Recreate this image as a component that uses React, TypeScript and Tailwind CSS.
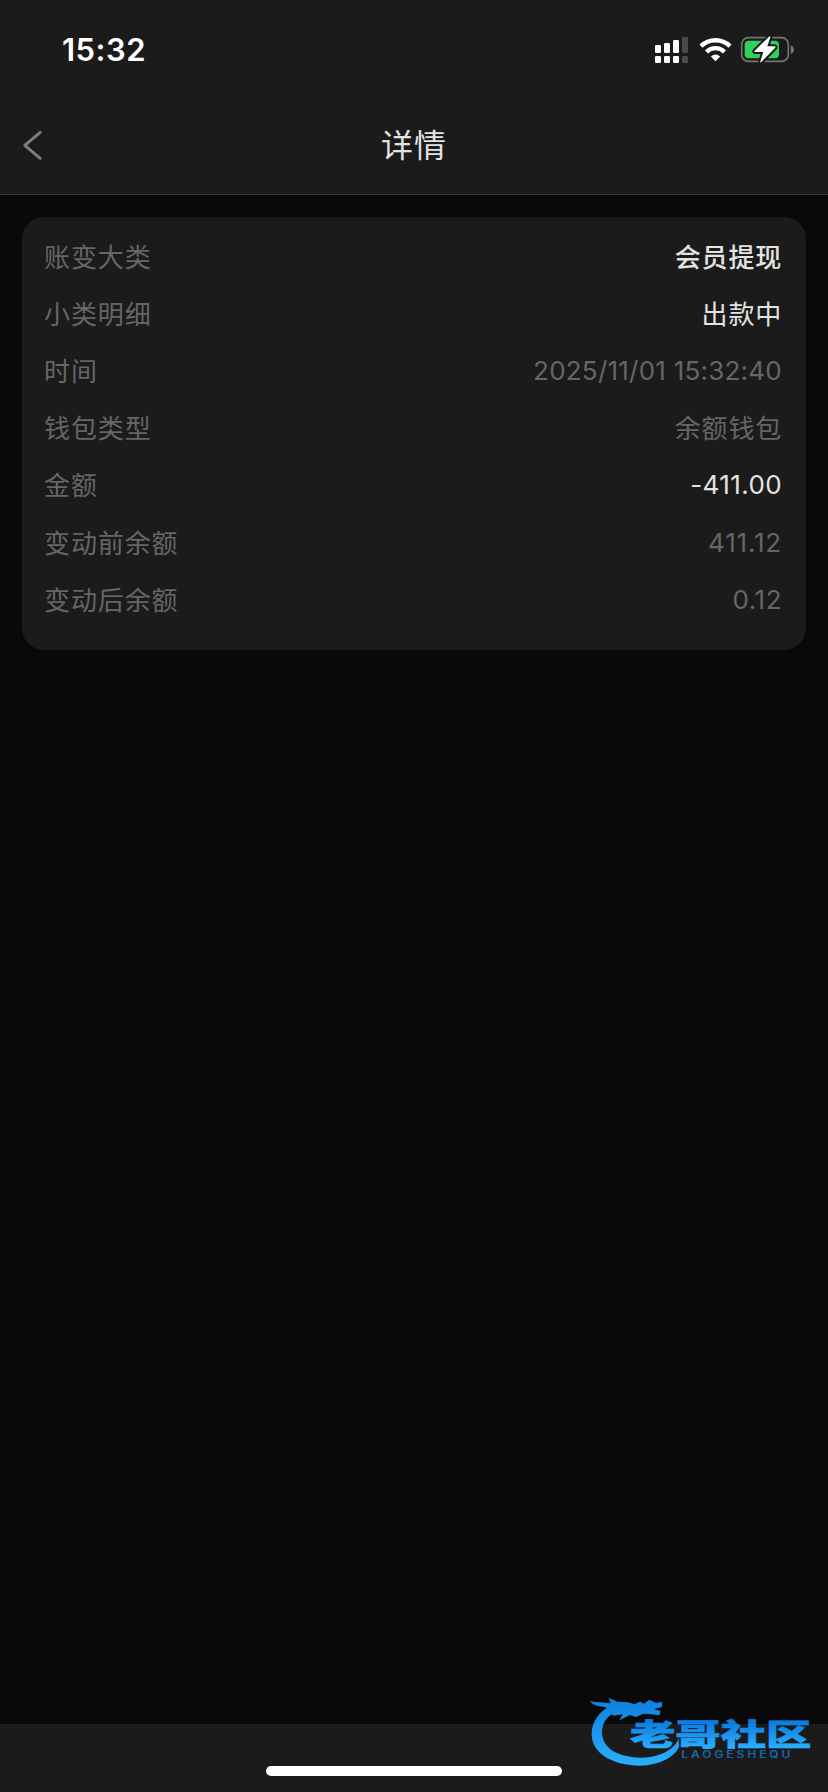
import clsx from 'clsx';

type Row = {
  label: string;
  value: string;
  className: string;
};

const rows: Row[] = [
  { label: '账变大类', value: '会员提现', className: 'pt-[2px] font-medium tracking-[0.8px] text-[#e3e3e3]' },
  { label: '小类明细', value: '出款中', className: 'pt-[2px] tracking-[0.8px] text-[#e3e3e3]' },
  { label: '时间', value: '2025/11/01 15:32:40', className: 'tracking-[0.23px] text-[#666]' },
  { label: '钱包类型', value: '余额钱包', className: 'pt-[2px] tracking-[0.8px] text-[#666]' },
  { label: '金额', value: '-411.00', className: 'tracking-[0.4px] text-[#e3e3e3]' },
  { label: '变动前余额', value: '411.12', className: 'tracking-[0.8px] text-[#666]' },
  { label: '变动后余额', value: '0.12', className: 'tracking-[0.5px] text-[#666]' },
];

const App = () => {
  return (
    <div className="relative flex h-[1792px] w-[828px] flex-col overflow-hidden bg-[#090909] font-['Inter','Noto_Sans_CJK_SC',sans-serif]">
      <header className="h-[195px] border-b border-[#353535] bg-[#1b1b1b]">
        <StatusBar />
        <div className="grid h-[92px] grid-cols-[1fr_auto_1fr] items-center">
          <button aria-label="返回" className="ml-[22px] w-6">
            <svg viewBox="0 0 24 34" className="h-[34px] w-6" fill="none">
              <path
                d="M18.200 3.300 2.800 16.300l15.400 13"
                stroke="#7d7d7d"
                strokeWidth="3"
                strokeLinecap="round"
                strokeLinejoin="round"
              />
            </svg>
          </button>
          <h1 className="text-[32px] leading-none font-normal tracking-[1px] text-[#e3e3e3]">详情</h1>
        </div>
      </header>

      <main className="flex-1 px-[22px] pt-[22px]">
        <div className="h-[433px] rounded-[22px] bg-[#1b1b1b] pt-[11px] pr-[24px] pl-[22px]">
          {rows.map((row) => (
            <DetailRow key={row.label} {...row} />
          ))}
        </div>
      </main>

      <footer className="flex h-[68px] justify-center bg-[#1b1b1b] pt-[42px]">
        <div className="h-[10px] w-[296px] rounded-full bg-white" />
      </footer>

      <Watermark />
    </div>
  );
};

export default App;

const DetailRow = ({ label, value, className }: Row) => {
  return (
    <div className="flex h-[57.2px] items-center justify-between text-[26px] leading-none">
      <span className="pt-[2px] tracking-[0.9px] text-[#666]">{label}</span>
      <span className={clsx('text-right', className)}>{value}</span>
    </div>
  );
};

const StatusBar = () => {
  return (
    <div className="flex h-[100px] items-start justify-between pr-[18px] pl-[62px]">
      <span className="pt-[34px] text-[31px] leading-8 font-semibold tracking-[0.5px] text-white">15:32</span>
      <svg viewBox="0 0 510 180" className="mt-5 h-[60px] w-[170px]">
        {/* dual sim signal */}
        <g fill="#fff">
          <rect x="45" y="75" width="18" height="24" rx="4" />
          <rect x="72" y="69" width="18" height="30" rx="4" />
          <rect x="99" y="60" width="18" height="39" rx="4" />
          <rect x="45" y="108" width="18" height="21" rx="4" />
          <rect x="72" y="108" width="18" height="21" rx="4" />
          <rect x="99" y="108" width="18" height="21" rx="4" />
        </g>
        <g fill="#4a4a4a">
          <rect x="126" y="51" width="18" height="48" rx="4" />
          <rect x="126" y="108" width="18" height="21" rx="4" />
        </g>
        {/* wifi */}
        <g fill="none" stroke="#fff" strokeWidth="13">
          <path d="M183 78.500a62 62 0 0 1 87 0" />
          <path d="M199.500 95.500a38.500 38.500 0 0 1 54 0" />
        </g>
        <path d="M226.500 124l-14-14.500q14-12 28 0z" fill="#fff" />
        {/* battery */}
        <rect x="305" y="53" width="140" height="71" rx="20" fill="none" stroke="#747474" strokeWidth="5" />
        <path d="M452 76q10 4 10 13t-10 13z" fill="#747474" />
        <rect x="314" y="62" width="103" height="53" rx="12" fill="#30d158" />
        <path
          d="M387 50 344 92q-3 4 2 4h24l-9 28q-1 5 3 2l41-42q4-5-2-5h-21l9-27q1-5-4-2z"
          fill="#fff"
          stroke="#1b1b1b"
          strokeWidth="12"
          strokeLinejoin="round"
          paintOrder="stroke"
        />
      </svg>
    </div>
  );
};

const Watermark = () => {
  return (
    <svg viewBox="0 0 744 321" className="absolute top-[1685px] left-[580px] h-[107px] w-[248px]">
      <defs>
        <linearGradient id="ring" gradientUnits="userSpaceOnUse" x1="0" y1="40" x2="0" y2="240">
          <stop offset="0" stopColor="#0f7fe0" />
          <stop offset="1" stopColor="#28aefc" />
        </linearGradient>
        <linearGradient id="word" gradientUnits="userSpaceOnUse" x1="0" y1="104" x2="0" y2="190">
          <stop offset="0" stopColor="#0a78dd" />
          <stop offset="1" stopColor="#28b0ff" />
        </linearGradient>
      </defs>
      {/* dragon body */}
      <path
        d="M100 60C60 74 35 108 35 148C35 206 100 242 180 242C240 242 290 212 297 184L296 160C285 192 240 218 185 218C115 218 66 190 66 142C66 110 86 86 125 76Z"
        fill="url(#ring)"
      />
      {/* dragon head */}
      <path
        d="M30 47C48 54 68 50 92 55L86 38L112 50L146 52L162 58L180 50L192 56L208 44L228 54L246 50L246 66L222 72L242 78L238 91L215 88L190 86L168 96L150 90L118 106L128 88L100 92L76 66C58 64 38 62 30 47Z"
        fill="url(#ring)"
      />
      <path d="M142 35c6-11 18-16 32-15M190 22c26 2 46 10 54 24" fill="none" stroke="#0a131b" strokeWidth="3" />
      <text
        x="150"
        y="179"
        fontSize="90"
        textLength="544"
        lengthAdjust="spacingAndGlyphs"
        fill="url(#word)"
        stroke="url(#word)"
        strokeWidth="2"
        className="font-['Noto_Sans_CJK_SC',sans-serif] font-black"
      >
        老哥社区
      </text>
      <text
        x="304"
        y="220"
        fontSize="29"
        textLength="336"
        lengthAdjust="spacingAndGlyphs"
        letterSpacing="7"
        fill="#1469ac"
        className="font-['Inter',sans-serif] font-semibold"
      >
        LAOGESHEQU
      </text>
    </svg>
  );
};
